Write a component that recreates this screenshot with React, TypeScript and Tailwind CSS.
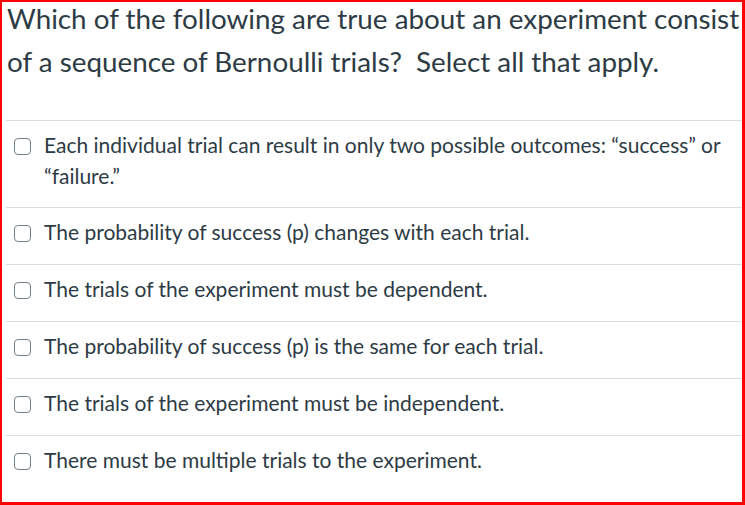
export default function App() {
  const options = [
    <>Each individual trial can result in only two possible outcomes: “success” or “failure.”</>,
    <>The probability of success (p) changes with each trial.</>,
    <>The trials of the experiment must be dependent.</>,
    <>The probability of success (p) is the same for each trial.</>,
    <>The trials of the experiment must be independent.</>,
    <>There must be multiple trials to the experiment.</>,
  ];

  return (
    <div
      className="w-[745px] h-[505px] overflow-hidden bg-white border-t-2 border-l-2 border-r-[3px] border-b-[3px] border-[#ff0000] text-[#2d3b45]"
      style={{ fontFamily: 'Lato, "Open Sans", sans-serif' }}
    >
      {/* Question text */}
      <div className="-mt-[5px] pl-[5px] h-[123px] text-[27.8px] leading-[43px] whitespace-nowrap overflow-hidden">
        <div>Which of the following are true about an experiment consist</div>
        <div>of a sequence of Bernoulli trials?&nbsp; Select all that apply.</div>
      </div>

      {/* Answers */}
      <div className="ml-[4px]">
        {options.map((label, i) => (
          <div
            key={i}
            className={
              i === 0
                ? 'flex items-start border-t border-[#dddddd] pt-[8px] pb-[16px] pl-[8px] pr-5'
                : 'flex items-start border-t border-[#dddddd] pt-[8px] pb-[17px] pl-[8px] pr-5'
            }
          >
            <span className="mt-[9px] mr-[13px] w-[17px] h-[17px] shrink-0 rounded-[4px] border-[1.5px] border-[#73818a] bg-white" />
            <span className="text-[21px] leading-[31px]">{label}</span>
          </div>
        ))}
      </div>
    </div>
  );
}
